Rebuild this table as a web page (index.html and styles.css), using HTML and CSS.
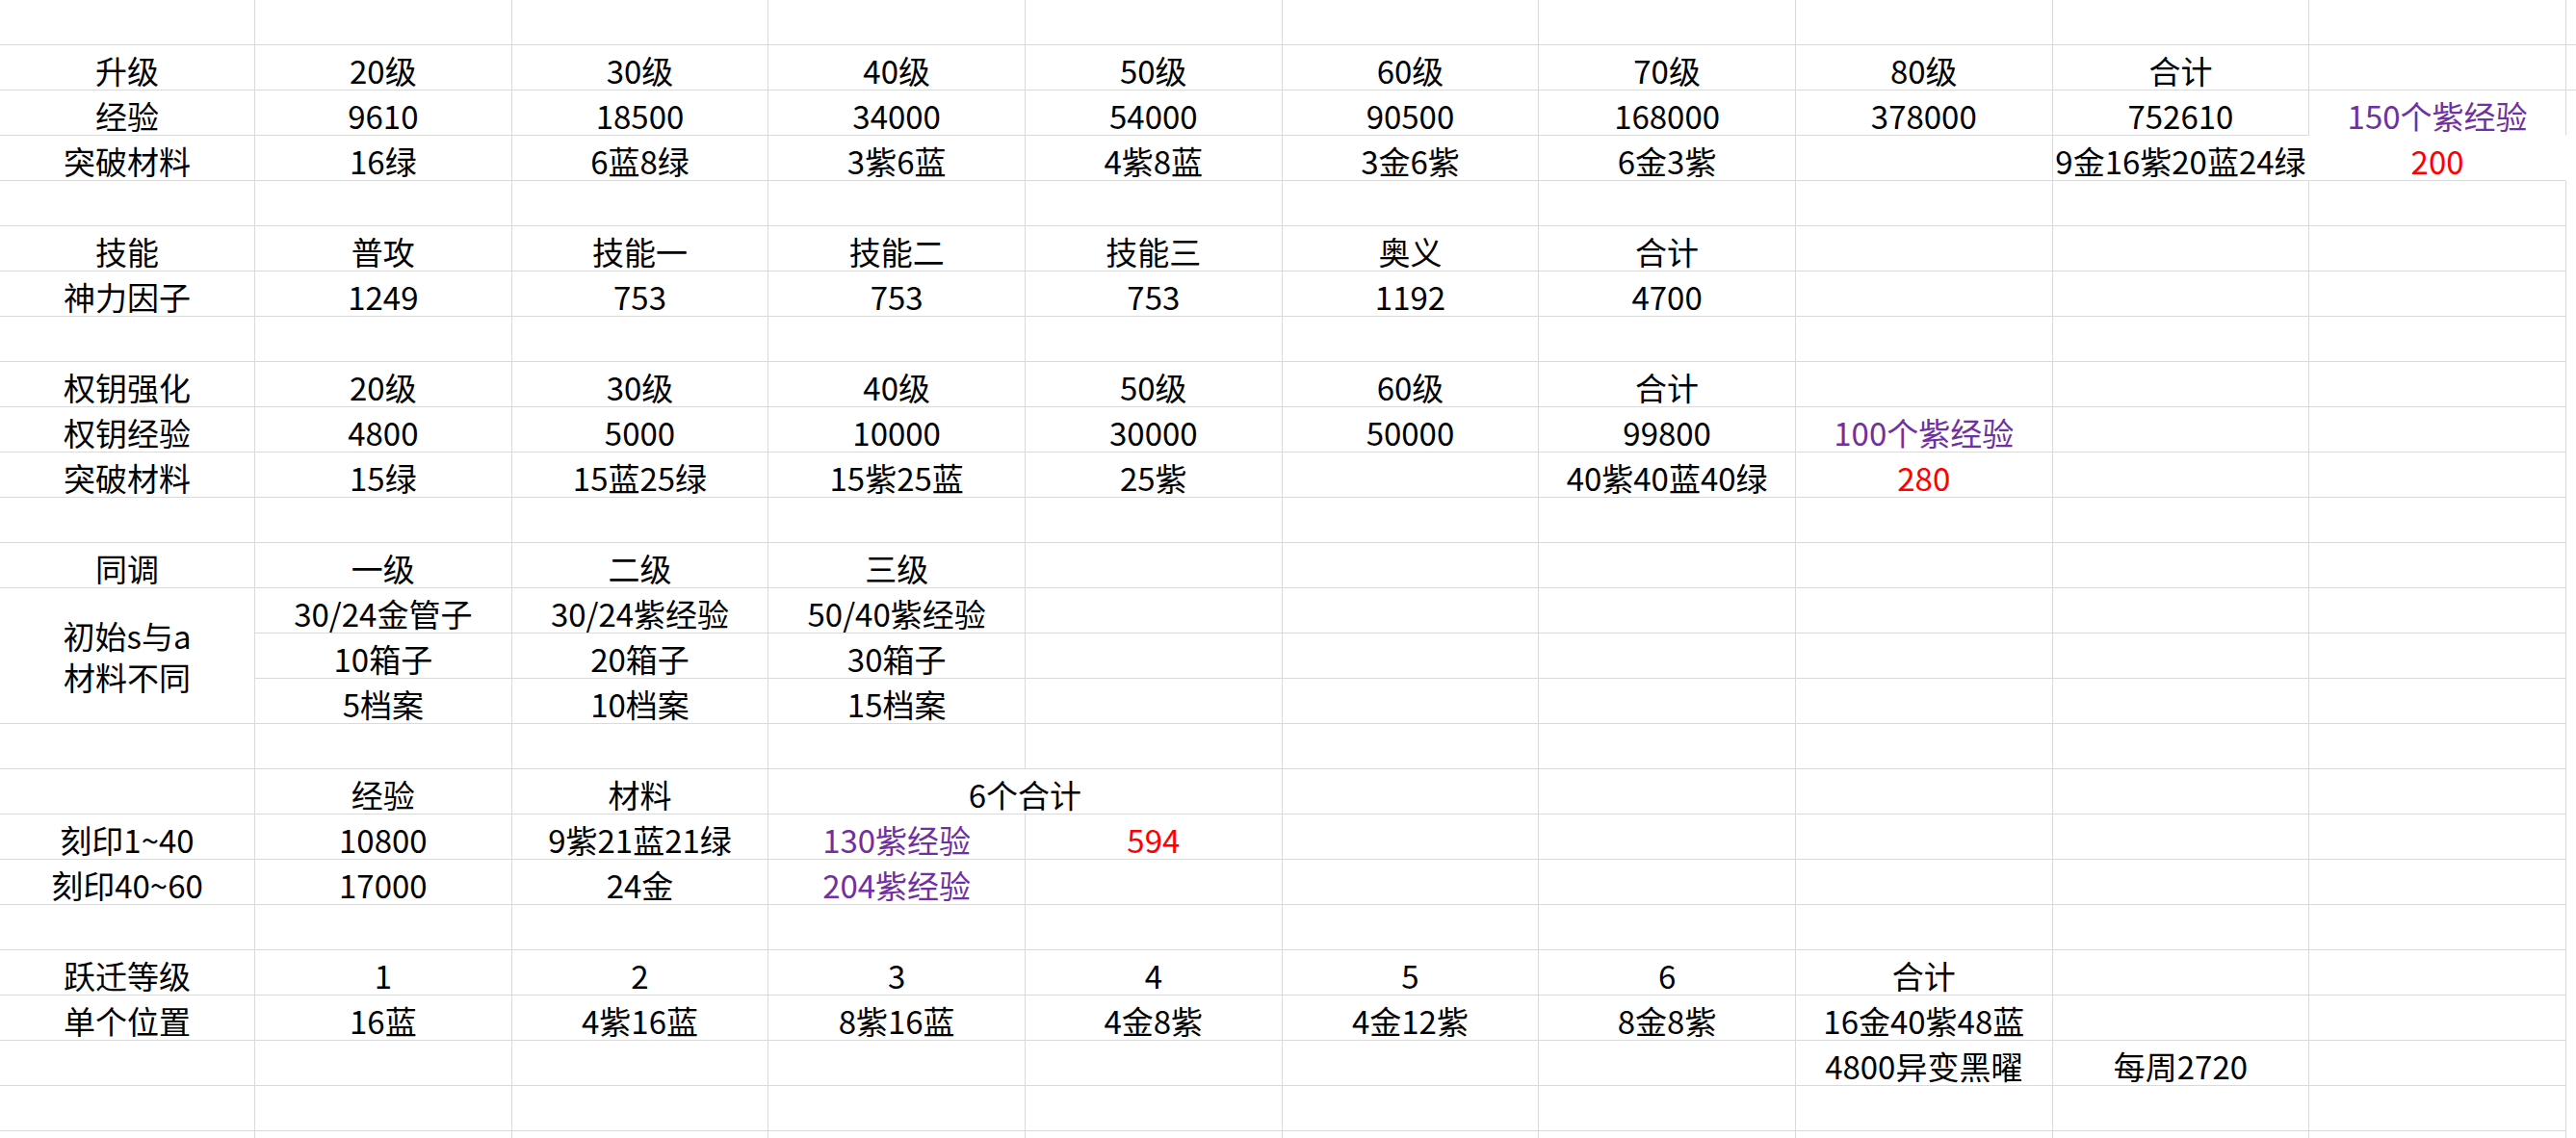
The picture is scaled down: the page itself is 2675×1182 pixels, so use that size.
FILE: index.html
```html
<!DOCTYPE html>
<html lang="zh-CN">
<head>
<meta charset="utf-8">
<title>养成材料统计</title>
<link rel="stylesheet" href="styles.css">
</head>
<body>
<div class="sheet">
  <!-- row 1 -->
  <div class="c"></div><div class="c"></div><div class="c"></div><div class="c"></div><div class="c"></div><div class="c"></div><div class="c"></div><div class="c"></div><div class="c"></div><div class="c"></div><div class="c k"></div>
  <!-- row 2 -->
  <div class="c">升级</div><div class="c">20级</div><div class="c">30级</div><div class="c">40级</div><div class="c">50级</div><div class="c">60级</div><div class="c">70级</div><div class="c">80级</div><div class="c">合计</div><div class="c"></div><div class="c k"></div>
  <!-- row 3 -->
  <div class="c">经验</div><div class="c">9610</div><div class="c">18500</div><div class="c">34000</div><div class="c">54000</div><div class="c">90500</div><div class="c">168000</div><div class="c">378000</div><div class="c">752610</div><div class="c p nb">150个紫经验</div><div class="c k kb"></div>
  <!-- row 4 -->
  <div class="c">突破材料</div><div class="c">16绿</div><div class="c">6蓝8绿</div><div class="c">3紫6蓝</div><div class="c">4紫8蓝</div><div class="c">3金6紫</div><div class="c">6金3紫</div><div class="c"></div><div class="c nr">9金16紫20蓝24绿</div><div class="c r nr">200</div><div class="c k none"></div>
  <!-- row 5 -->
  <div class="c"></div><div class="c"></div><div class="c"></div><div class="c"></div><div class="c"></div><div class="c"></div><div class="c"></div><div class="c"></div><div class="c"></div><div class="c"></div><div class="c k none"></div>
  <!-- row 6 -->
  <div class="c">技能</div><div class="c">普攻</div><div class="c">技能一</div><div class="c">技能二</div><div class="c">技能三</div><div class="c">奥义</div><div class="c">合计</div><div class="c"></div><div class="c"></div><div class="c"></div><div class="c k none"></div>
  <!-- row 7 -->
  <div class="c">神力因子</div><div class="c">1249</div><div class="c">753</div><div class="c">753</div><div class="c">753</div><div class="c">1192</div><div class="c">4700</div><div class="c"></div><div class="c"></div><div class="c"></div><div class="c k none"></div>
  <!-- row 8 -->
  <div class="c"></div><div class="c"></div><div class="c"></div><div class="c"></div><div class="c"></div><div class="c"></div><div class="c"></div><div class="c"></div><div class="c"></div><div class="c"></div><div class="c k none"></div>
  <!-- row 9 -->
  <div class="c">权钥强化</div><div class="c">20级</div><div class="c">30级</div><div class="c">40级</div><div class="c">50级</div><div class="c">60级</div><div class="c">合计</div><div class="c"></div><div class="c"></div><div class="c"></div><div class="c k none"></div>
  <!-- row 10 -->
  <div class="c">权钥经验</div><div class="c">4800</div><div class="c">5000</div><div class="c">10000</div><div class="c">30000</div><div class="c">50000</div><div class="c">99800</div><div class="c p">100个紫经验</div><div class="c"></div><div class="c"></div><div class="c k none"></div>
  <!-- row 11 -->
  <div class="c">突破材料</div><div class="c">15绿</div><div class="c">15蓝25绿</div><div class="c">15紫25蓝</div><div class="c">25紫</div><div class="c"></div><div class="c">40紫40蓝40绿</div><div class="c r">280</div><div class="c"></div><div class="c"></div><div class="c k none"></div>
  <!-- row 12 -->
  <div class="c"></div><div class="c"></div><div class="c"></div><div class="c"></div><div class="c"></div><div class="c"></div><div class="c"></div><div class="c"></div><div class="c"></div><div class="c"></div><div class="c k none"></div>
  <!-- row 13 -->
  <div class="c">同调</div><div class="c">一级</div><div class="c">二级</div><div class="c">三级</div><div class="c"></div><div class="c"></div><div class="c"></div><div class="c"></div><div class="c"></div><div class="c"></div><div class="c k none"></div>
  <!-- row 14 -->
  <div class="c merge-v"><span class="two">初始s与a<br>材料不同</span></div><div class="c">30/24金管子</div><div class="c">30/24紫经验</div><div class="c">50/40紫经验</div><div class="c"></div><div class="c"></div><div class="c"></div><div class="c"></div><div class="c"></div><div class="c"></div><div class="c k none"></div>
  <!-- row 15 -->
  <div class="c">10箱子</div><div class="c">20箱子</div><div class="c">30箱子</div><div class="c"></div><div class="c"></div><div class="c"></div><div class="c"></div><div class="c"></div><div class="c"></div><div class="c k none"></div>
  <!-- row 16 -->
  <div class="c">5档案</div><div class="c">10档案</div><div class="c">15档案</div><div class="c"></div><div class="c"></div><div class="c"></div><div class="c"></div><div class="c"></div><div class="c"></div><div class="c k none"></div>
  <!-- row 17 -->
  <div class="c"></div><div class="c"></div><div class="c"></div><div class="c"></div><div class="c"></div><div class="c"></div><div class="c"></div><div class="c"></div><div class="c"></div><div class="c"></div><div class="c k none"></div>
  <!-- row 18 -->
  <div class="c"></div><div class="c">经验</div><div class="c">材料</div><div class="c merge-h">6个合计</div><div class="c"></div><div class="c"></div><div class="c"></div><div class="c"></div><div class="c"></div><div class="c k none"></div>
  <!-- row 19 -->
  <div class="c">刻印1~40</div><div class="c">10800</div><div class="c">9紫21蓝21绿</div><div class="c p">130紫经验</div><div class="c r">594</div><div class="c"></div><div class="c"></div><div class="c"></div><div class="c"></div><div class="c"></div><div class="c k none"></div>
  <!-- row 20 -->
  <div class="c">刻印40~60</div><div class="c">17000</div><div class="c">24金</div><div class="c p">204紫经验</div><div class="c"></div><div class="c"></div><div class="c"></div><div class="c"></div><div class="c"></div><div class="c"></div><div class="c k none"></div>
  <!-- row 21 -->
  <div class="c"></div><div class="c"></div><div class="c"></div><div class="c"></div><div class="c"></div><div class="c"></div><div class="c"></div><div class="c"></div><div class="c"></div><div class="c"></div><div class="c k none"></div>
  <!-- row 22 -->
  <div class="c">跃迁等级</div><div class="c">1</div><div class="c">2</div><div class="c">3</div><div class="c">4</div><div class="c">5</div><div class="c">6</div><div class="c">合计</div><div class="c"></div><div class="c"></div><div class="c k none"></div>
  <!-- row 23 -->
  <div class="c">单个位置</div><div class="c">16蓝</div><div class="c">4紫16蓝</div><div class="c">8紫16蓝</div><div class="c">4金8紫</div><div class="c">4金12紫</div><div class="c">8金8紫</div><div class="c">16金40紫48蓝</div><div class="c"></div><div class="c"></div><div class="c k none"></div>
  <!-- row 24 -->
  <div class="c"></div><div class="c"></div><div class="c"></div><div class="c"></div><div class="c"></div><div class="c"></div><div class="c"></div><div class="c">4800异变黑曜</div><div class="c">每周2720</div><div class="c"></div><div class="c k none"></div>
  <!-- row 25 -->
  <div class="c"></div><div class="c"></div><div class="c"></div><div class="c"></div><div class="c"></div><div class="c"></div><div class="c"></div><div class="c"></div><div class="c"></div><div class="c"></div><div class="c k none"></div>
  <!-- row 26 -->
  <div class="c"></div><div class="c"></div><div class="c"></div><div class="c"></div><div class="c"></div><div class="c"></div><div class="c"></div><div class="c"></div><div class="c"></div><div class="c"></div><div class="c k none"></div>
</div>
</body>
</html>
```
FILE: styles.css
```css
html, body {
  margin: 0;
  padding: 0;
  background: #ffffff;
  overflow: hidden;
}

.sheet {
  display: grid;
  grid-template-columns: 265px repeat(9, 266.67px) 40px;
  grid-auto-rows: 47px;
  width: 2675px;
  height: 1182px;
  overflow: hidden;
  font-family: "Noto Sans CJK SC", "Noto Sans", sans-serif;
  font-size: 33px;
  color: #000000;
}

.c {
  box-sizing: border-box;
  border-right: 1px solid #dadada;
  border-bottom: 1px solid #dadada;
  display: flex;
  align-items: flex-end;
  justify-content: center;
  line-height: 40px;
  white-space: nowrap;
  overflow: visible;
  min-width: 0;
}

.p { color: #7030a0; }
.r { color: #ff0000; }

.nb { border-bottom-color: transparent; }
.nr { border-right-color: transparent; }
.none { border-color: transparent; }
.kb { border-bottom-color: transparent; }

.merge-v {
  grid-row: span 3;
  align-items: center;
}

.merge-v .two {
  display: block;
  text-align: center;
  line-height: 43px;
  padding-top: 2px;
}

.merge-h {
  grid-column: span 2;
}
```
